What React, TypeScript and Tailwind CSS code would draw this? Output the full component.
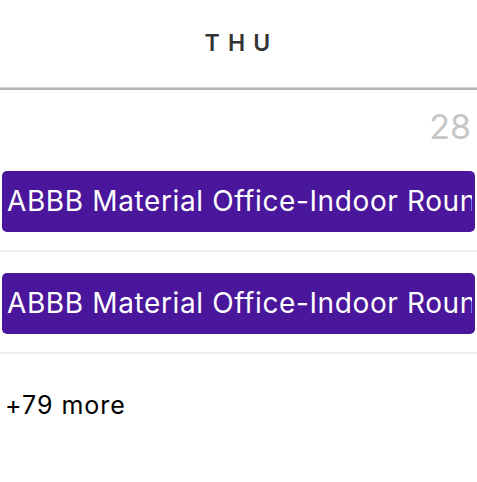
import React from "react";

const EventBar: React.FC<{ title: string }> = ({ title }) => (
  <div className="mx-[2px] h-[61px] rounded-[5px] bg-[#4a169b] flex items-center pl-[5px] pr-[3px]">
    <div className="overflow-hidden w-full">
      <span className="text-[28px] tracking-[0.022em] leading-none text-white whitespace-nowrap">{title}</span>
    </div>
  </div>
);

export default function App() {
  return (
    <div className="w-[477px] h-[482px] bg-white overflow-hidden" style={{ fontFamily: "Inter, 'Noto Sans', sans-serif" }}>
      {/* Header */}
      <div className="h-[87px] flex items-center justify-center pl-[6px]">
        <span className="text-[23px] font-semibold tracking-[0.36em] text-[#333333] leading-none">THU</span>
      </div>
      <div className="h-[1px] bg-[#d4d4d4]" />
      <div className="h-[2px] bg-[#b4b4b4]" />

      {/* Day cell */}
      <div className="flex justify-end pr-[6px] pt-[20px]">
        <span className="text-[34px] leading-none text-[#c6c6c6]">28</span>
      </div>

      <div className="mt-[27px]">
        <EventBar title="ABBB Material Office-Indoor Round" />
      </div>
      <div className="mt-[18px] h-[2px] bg-[#ececec]" />

      <div className="mt-[21px]">
        <EventBar title="ABBB Material Office-Indoor Round" />
      </div>
      <div className="mt-[18px] h-[2px] bg-[#ececec]" />

      <div className="pl-[5px] pt-[39px]">
        <span className="text-[25px] tracking-[0.04em] leading-none text-black">+79 more</span>
      </div>
    </div>
  );
}
